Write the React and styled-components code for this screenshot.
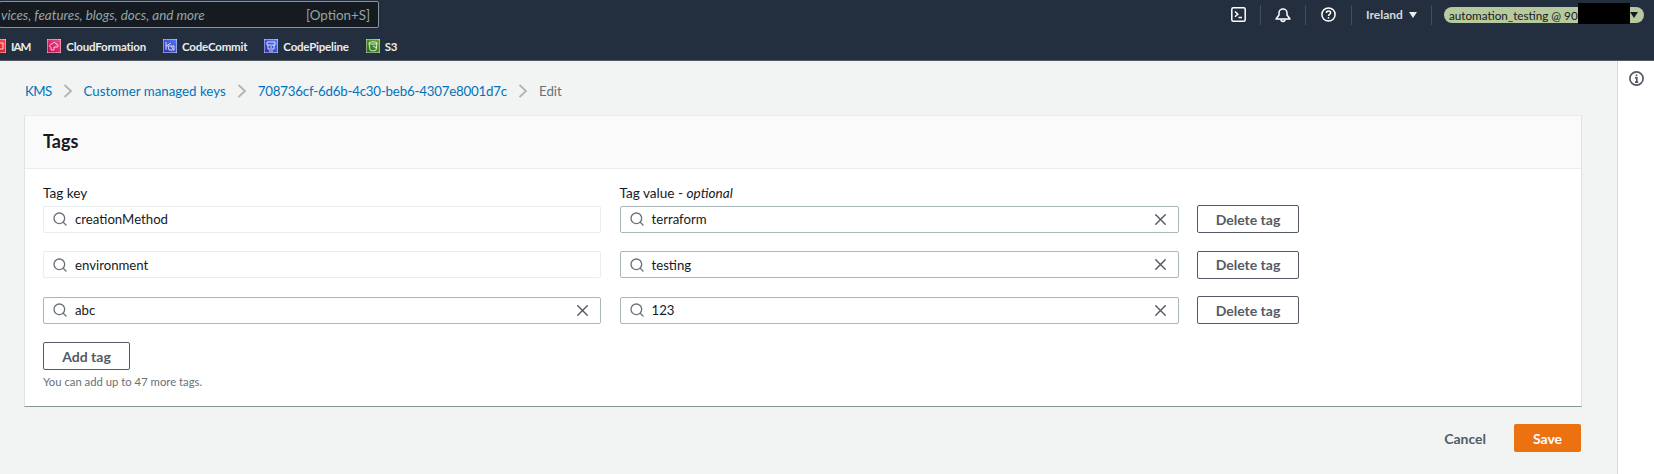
import React from 'react'
import styled, { createGlobalStyle } from 'styled-components'
import { Search, X } from 'lucide-react'

const GlobalStyle = createGlobalStyle`
  html, body {
    margin: 0;
    padding: 0;
    background: #f2f3f3;
  }
  * {
    box-sizing: border-box;
  }
`

const Page = styled.div`
  width: 1654px;
  height: 474px;
  display: flex;
  flex-direction: column;
  overflow: hidden;
  font-family: Lato, "Open Sans", sans-serif;
  font-size: 14px;
  color: #16191f;
`

const Header = styled.header`
  height: 61px;
  flex: none;
  background: #232f3e;
  border-bottom: 1px solid #545b64;
  display: flex;
  flex-direction: column;
`

const TopRow = styled.div`
  height: 33px;
  padding-top: 1px;
  display: flex;
  justify-content: space-between;
  align-items: flex-start;
`

const SearchBox = styled.div`
  width: 380px;
  height: 27px;
  margin-left: -1px;
  padding: 0 8px 0 1px;
  display: flex;
  align-items: center;
  justify-content: space-between;
  background: #161b22;
  border: 1px solid #879596;
  border-radius: 2px;
  color: #95a5a6;
  font-size: 13.4px;
`

const SearchHint = styled.span`
  font-style: italic;
`

const NavRight = styled.div`
  display: flex;
  align-items: center;
  height: 24px;
  padding-right: 10px;
`

const NavItem = styled.div`
  width: ${p => p.$w}px;
  height: 20px;
  margin-top: 3px;
  display: flex;
  align-items: center;
  justify-content: center;
  gap: 6px;
  color: #d5dbdb;
  font-weight: 700;
  font-size: 12px;
  border-right: 1px solid #414d5c;
`

const Caret = styled.span`
  width: 0;
  height: 0;
  border-left: 4px solid transparent;
  border-right: 4px solid transparent;
  border-top: 6px solid ${p => p.$color || '#eaeded'};
`

const AccountPill = styled.div`
  position: relative;
  width: 200px;
  height: 16px;
  margin-left: 12px;
  margin-top: 3px;
  padding: 0 6px 0 5px;
  display: flex;
  align-items: center;
  justify-content: space-between;
  background: #b7ca9d;
  border-radius: 8px;
  color: #16191f;
  font-size: 11.7px;
`

const Redacted = styled.div`
  position: absolute;
  left: 134px;
  top: -4px;
  width: 52px;
  height: 21px;
  background: #000;
`

const BookmarkRow = styled.div`
  height: 27px;
  margin-left: -8px;
  display: flex;
  align-items: center;
  gap: 17px;
  padding-bottom: 1px;
`

const Bookmark = styled.div`
  display: flex;
  align-items: center;
  gap: 5px;
  color: #eaeded;
  font-size: 11.5px;
  font-weight: 700;
  letter-spacing: ${p => p.$spacing || '-0.2px'};
`

const Main = styled.main`
  flex: 1;
  display: flex;
  min-height: 0;
`

const Content = styled.div`
  flex: 1;
  padding: 0 35px 0 24px;
`

const SidePanel = styled.aside`
  width: 37px;
  flex: none;
  background: #fff;
  border-left: 1px solid #d5dbdb;
  padding: 10px 0 0 11px;
  color: #545b64;
`

const Breadcrumbs = styled.nav`
  height: 54px;
  padding: 6px 0 0 1px;
  display: flex;
  align-items: center;
  gap: 11px;
  font-size: 13.3px;
`

const Crumb = styled.span`
  color: ${p => (p.$current ? '#687078' : '#0073bb')};
  letter-spacing: ${p => p.$spacing || 0};
`

const Card = styled.section`
  height: 292px;
  background: #fff;
  border: 1px solid #dfe3e3;
  border-top-color: #eaeded;
  border-bottom-color: #879596;
`

const CardHeader = styled.div`
  height: 53px;
  padding: 0 0 3px 18px;
  display: flex;
  align-items: center;
  background: #fafafa;
  border-bottom: 1px solid #eaeded;
`

const CardTitle = styled.h2`
  margin: 0;
  font-size: 18px;
  font-weight: 700;
  color: #16191f;
`

const CardBody = styled.div`
  padding: 16px 18px 0 18px;
`

const TagGrid = styled.div`
  display: grid;
  grid-template-columns: 558px 559px 102px;
  column-gap: 18.5px;
  row-gap: 17.5px;
  align-items: center;
`

const LabelCell = styled.div`
  grid-column: ${p => p.$col};
  height: 16px;
  line-height: 16px;
  margin-bottom: -13.5px;
  font-size: 13.6px;
`

const Optional = styled.em`
  font-style: italic;
`

const InputBox = styled.div`
  height: 27px;
  padding: 0 8px;
  display: flex;
  align-items: center;
  gap: 7px;
  background: #fff;
  border: 1px solid ${p => (p.$disabled ? '#eaeded' : '#aab7b8')};
  border-radius: 2px;
  color: #16191f;
  font-size: 13.2px;
`

const InputText = styled.span`
  flex: 1;
`

const OutlineButton = styled.button`
  width: ${p => p.$w || '102px'};
  height: 28px;
  padding: 0;
  background: #fff;
  border: 1px solid #545b64;
  border-radius: 2px;
  color: #545b64;
  font-family: inherit;
  font-size: 14px;
  font-weight: 700;
`

const AddRow = styled.div`
  margin-top: 18px;
  display: flex;
  flex-direction: column;
  gap: 3.5px;
`

const HelpText = styled.span`
  font-size: 11.3px;
  line-height: 16px;
  color: #687078;
`

const Actions = styled.div`
  margin-top: 17px;
  padding-right: 1px;
  display: flex;
  justify-content: flex-end;
  align-items: center;
  gap: 28px;
`

const CancelLink = styled.span`
  color: #545b64;
  font-weight: 700;
`

const SaveButton = styled.button`
  width: 67px;
  height: 28px;
  padding: 0;
  background: #ec7211;
  border: none;
  border-radius: 2px;
  color: #fff;
  font-family: inherit;
  font-size: 14px;
  font-weight: 700;
`

const ServiceIcon = ({ id, from, to, children }) => (
  <svg width="14" height="14" viewBox="0 0 14 14" fill="none" stroke="#fff" strokeWidth="0.8" style={{ flex: 'none' }}>
    <defs>
      <linearGradient id={id} x1="0" y1="1" x2="1" y2="0">
        <stop offset="0" stopColor={from} />
        <stop offset="1" stopColor={to} />
      </linearGradient>
    </defs>
    <rect width="14" height="14" fill={`url(#${id})`} />
    {children}
  </svg>
)

const TerminalIcon = () => (
  <svg width="15" height="15" viewBox="0 0 15 15" fill="none" stroke="#fff" strokeWidth="1.5">
    <rect x="0.8" y="0.8" width="13.4" height="13.4" rx="1.5" />
    <path d="M4 4.5 L6.8 7.2 L4 9.8 M7.5 10.5 H11" />
  </svg>
)

const BellIcon = () => (
  <svg width="16" height="16" viewBox="0 0 16 16" fill="none" stroke="#fff" strokeWidth="1.5">
    <path d="M1 12 L4 8 V6 C4 3.5 6 2 8 2 C10 2 12 3.5 12 6 V8 L15 12 Z" strokeLinejoin="round" />
    <path d="M6 12.5 C6 15 10 15 10 12.5" />
  </svg>
)

const QuestionIcon = () => (
  <svg width="15" height="15" viewBox="0 0 15 15" fill="none" stroke="#fff" strokeWidth="1.5">
    <circle cx="7.5" cy="7.5" r="6.6" />
    <path d="M5.4 6 C5.4 3.4 9.6 3.4 9.6 5.8 C9.6 7.4 7.5 7.3 7.5 9" />
    <path d="M7.5 10 V11.6" />
  </svg>
)

const InfoIcon = () => (
  <svg width="15" height="15" viewBox="0 0 15 15" fill="none" stroke="currentColor" strokeWidth="1.7">
    <circle cx="7.5" cy="7.5" r="6.6" />
    <path d="M7.5 3.4 V5.2 M6 6.8 H7.8 V11 M6 11.2 H9.2" />
  </svg>
)

const CrumbArrow = () => (
  <svg width="10" height="14" viewBox="0 0 10 14" fill="none" stroke="#aab7b8" strokeWidth="1.8">
    <path d="M1.5 1 L8 7 L1.5 13" />
  </svg>
)

const bookmarks = [
  {
    name: 'IAM', id: 'iam', from: '#bd0816', to: '#ff5252', spacing: '-1px',
    art: <path d="M3 4 H11 V10 H3 Z M5 6 H7 M5 8 H7" />,
  },
  {
    name: 'CloudFormation', id: 'cfn', from: '#b0084d', to: '#ff4f8b',
    art: <path d="M3 8 C2 6 4 5 5 5 C6 3 9 3 9 5 C11 5 12 8 10 8 H7 M4 8 V11 H7 V8" />,
  },
  {
    name: 'CodeCommit', id: 'commit', from: '#2e27ad', to: '#527fff',
    art: <path d="M3 3 V11 M3 7 L8 4 M5 7 H11 V11 H6 Z M8 7 L10 10" />,
  },
  {
    name: 'CodePipeline', id: 'pipeline', from: '#2e27ad', to: '#527fff',
    art: <path d="M3 3 H11 V6 H3 Z M4 6 V10 H10 V6 M6 8 H8 M5 12 H9" />,
  },
  {
    name: 'S3', id: 's3', from: '#1b660f', to: '#6cae3e',
    art: <path d="M3 4 C3 2.5 11 2.5 11 4 L10 11 C10 12 4 12 4 11 Z M3 4 C3 5.5 11 5.5 11 4 M7 7 L11 9" />,
  },
]

const tagRows = [
  { key: 'creationMethod', value: 'terraform', locked: true },
  { key: 'environment', value: 'testing', locked: true },
  { key: 'abc', value: '123', locked: false },
]

const TagField = ({ text, disabled, clearable }) => (
  <InputBox $disabled={disabled}>
    <Search size={16} color="#687078" strokeWidth={2} />
    <InputText>{text}</InputText>
    {clearable && <X size={19} color="#545b64" strokeWidth={1.8} />}
  </InputBox>
)

export default function App() {
  return (
    <Page>
      <GlobalStyle />
      <Header>
        <TopRow>
          <SearchBox>
            <SearchHint>vices, features, blogs, docs, and more</SearchHint>
            <span>[Option+S]</span>
          </SearchBox>
          <NavRight>
            <NavItem $w={45}><TerminalIcon /></NavItem>
            <NavItem $w={45}><BellIcon /></NavItem>
            <NavItem $w={46}><QuestionIcon /></NavItem>
            <NavItem $w={80}>Ireland <Caret /></NavItem>
            <AccountPill>
              automation_testing @ 90
              <Redacted />
              <Caret $color="#16191f" />
            </AccountPill>
          </NavRight>
        </TopRow>
        <BookmarkRow>
          {bookmarks.map(b => (
            <Bookmark key={b.id} $spacing={b.spacing}>
              <ServiceIcon id={b.id} from={b.from} to={b.to}>{b.art}</ServiceIcon>
              {b.name}
            </Bookmark>
          ))}
        </BookmarkRow>
      </Header>
      <Main>
        <Content>
          <Breadcrumbs>
            <Crumb $spacing="-0.6px">KMS</Crumb>
            <CrumbArrow />
            <Crumb>Customer managed keys</Crumb>
            <CrumbArrow />
            <Crumb $spacing="-0.2px">708736cf-6d6b-4c30-beb6-4307e8001d7c</Crumb>
            <CrumbArrow />
            <Crumb $current>Edit</Crumb>
          </Breadcrumbs>
          <Card>
            <CardHeader>
              <CardTitle>Tags</CardTitle>
            </CardHeader>
            <CardBody>
              <TagGrid>
                <LabelCell $col={1}>Tag key</LabelCell>
                <LabelCell $col={2}>Tag value - <Optional>optional</Optional></LabelCell>
                <LabelCell $col={3} />
                {tagRows.map(row => (
                  <React.Fragment key={row.key}>
                    <TagField text={row.key} disabled={row.locked} clearable={!row.locked} />
                    <TagField text={row.value} clearable />
                    <OutlineButton>Delete tag</OutlineButton>
                  </React.Fragment>
                ))}
              </TagGrid>
              <AddRow>
                <OutlineButton $w="87px">Add tag</OutlineButton>
                <HelpText>You can add up to 47 more tags.</HelpText>
              </AddRow>
            </CardBody>
          </Card>
          <Actions>
            <CancelLink>Cancel</CancelLink>
            <SaveButton>Save</SaveButton>
          </Actions>
        </Content>
        <SidePanel>
          <InfoIcon />
        </SidePanel>
      </Main>
    </Page>
  )
}
